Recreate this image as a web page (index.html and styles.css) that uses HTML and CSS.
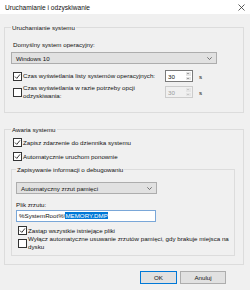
FILE: index.html
```html
<!DOCTYPE html>
<html lang="pl">
<head>
    <meta charset="UTF-8">
    <title>Uruchamianie i odzyskiwanie</title>
    <link rel="stylesheet" href="styles.css">
</head>
<body>

<div class="dialog">
    <div class="titlebar">
        <span class="title">Uruchamianie i odzyskiwanie</span>
        <svg class="close" width="7" height="7" viewBox="0 0 7 7"><path d="M0.5 0.5L6.5 6.5M6.5 0.5L0.5 6.5" stroke="#333" stroke-width="0.8"/></svg>
    </div>

    <div class="content">
        <fieldset class="group startup">
            <legend>Uruchamianie systemu</legend>
            <div class="label">Domyślny system operacyjny:</div>
            <div class="select os-select">
                <span>Windows 10</span>
                <svg width="5" height="3" viewBox="0 0 5 3"><path d="M0.3 0.3L2.5 2.5L4.7 0.3" fill="none" stroke="#444" stroke-width="0.7"/></svg>
            </div>

            <div class="opt-row">
                <span class="box"><svg width="7" height="7" viewBox="0 0 7 7"><path d="M1 3.6L2.8 5.4L6 1.4" fill="none" stroke="#222" stroke-width="0.9"/></svg></span>
                <span class="opt-text">Czas wyświetlania listy systemów operacyjnych:</span>
                <div class="spin">
                    <span class="spin-val">30</span>
                    <span class="spin-btns"><i class="up"></i><i class="down"></i></span>
                </div>
                <span class="unit">s</span>
            </div>

            <div class="opt-row two-line">
                <span class="box"></span>
                <span class="opt-text">Czas wyświetlania w razie potrzeby opcji<br>odzyskiwania:</span>
                <div class="spin disabled">
                    <span class="spin-val">30</span>
                    <span class="spin-btns"><i class="up"></i><i class="down"></i></span>
                </div>
                <span class="unit">s</span>
            </div>
        </fieldset>

        <fieldset class="group failure">
            <legend>Awaria systemu</legend>
            <div class="check-row">
                <span class="box"><svg width="7" height="7" viewBox="0 0 7 7"><path d="M1 3.6L2.8 5.4L6 1.4" fill="none" stroke="#222" stroke-width="0.9"/></svg></span>
                <span>Zapisz zdarzenie do dziennika systemu</span>
            </div>
            <div class="check-row">
                <span class="box"><svg width="7" height="7" viewBox="0 0 7 7"><path d="M1 3.6L2.8 5.4L6 1.4" fill="none" stroke="#222" stroke-width="0.9"/></svg></span>
                <span>Automatycznie uruchom ponownie</span>
            </div>

            <fieldset class="group debug">
                <legend>Zapisywanie informacji o debugowaniu</legend>
                <div class="select dump-select">
                    <span>Automatyczny zrzut pamięci</span>
                    <svg width="5" height="3" viewBox="0 0 5 3"><path d="M0.3 0.3L2.5 2.5L4.7 0.3" fill="none" stroke="#444" stroke-width="0.7"/></svg>
                </div>
                <div class="label file-label">Plik zrzutu:</div>
                <div class="textbox">%SystemRoot%\<span class="sel">MEMORY.DMP</span></div>
                <div class="check-row overwrite">
                    <span class="box"><svg width="7" height="7" viewBox="0 0 7 7"><path d="M1 3.6L2.8 5.4L6 1.4" fill="none" stroke="#222" stroke-width="0.9"/></svg></span>
                    <span>Zastąp wszystkie istniejące pliki</span>
                </div>
                <div class="check-row two-line">
                    <span class="box"></span>
                    <span>Wyłącz automatyczne usuwanie zrzutów pamięci, gdy brakuje miejsca na<br>dysku</span>
                </div>
            </fieldset>
        </fieldset>

        <div class="buttons">
            <button class="btn default">OK</button>
            <button class="btn">Anuluj</button>
        </div>
    </div>
</div>

</body>
</html>
```

FILE: styles.css
```css
body {
    margin: 0;
    font-family: "Liberation Sans", Arial, sans-serif;
    font-size: 6.2px;
    color: #111;
    background-color: #f0f0f0;
}
.dialog {
    width: 250px;
    height: 290px;
    overflow: hidden;
    background-color: #f0f0f0;
}
.titlebar {
    height: 14px;
    background-color: #ffffff;
    display: flex;
    align-items: center;
    justify-content: space-between;
    padding: 0 5px 0 5px;
}
.title {
    font-size: 6.6px;
    color: #111;
}
.content {
    padding: 10px 6px 0 4px;
}
.group {
    margin: 0;
    border: 1px solid #dcdcdc;
    padding: 0 6px 0 6px;
}
.group legend {
    padding: 0 1px;
    margin-left: 0;
    color: #111;
}
.startup {
    padding-top: 10px;
    padding-bottom: 12px;
}
.label {
    height: 8px;
    line-height: 8px;
    padding-left: 2px;
}
.select {
    display: flex;
    align-items: center;
    justify-content: space-between;
    height: 10px;
    margin-top: 3px;
    padding: 0 4px 0 4px;
    background-color: #e1e1e1;
    border: 1px solid #adadad;
}
.os-select {
    width: 196px;
}
.opt-row {
    display: flex;
    align-items: center;
    margin-top: 6px;
    height: 12px;
}
.opt-row.two-line {
    margin-top: 2px;
    height: 16px;
}
.box {
    width: 7px;
    height: 7px;
    border: 1px solid #333;
    background-color: #fff;
    margin: 0 1px 0 2px;
    flex: none;
    display: flex;
}
.opt-text {
    width: 142px;
    line-height: 8px;
}
.spin {
    display: flex;
    width: 26px;
    height: 10px;
    background-color: #fff;
    border: 1px solid #7a7a7a;
    align-items: center;
}
.spin.disabled {
    border-color: #cccccc;
    color: #9a9a9a;
    background-color: #f0f0f0;
}
.spin-val {
    flex: 1;
    padding-left: 2px;
}
.spin-btns {
    width: 5px;
    height: 8px;
    margin-right: 1px;
    display: flex;
    flex-direction: column;
    gap: 1px;
}
.spin-btns i {
    flex: 1;
    background-color: #e5e5e5;
    position: relative;
}
.spin-btns i::after {
    content: "";
    position: absolute;
    left: 1px;
    border-left: 1.5px solid transparent;
    border-right: 1.5px solid transparent;
}
.spin-btns .up::after {
    top: 1px;
    border-bottom: 1.5px solid #555;
}
.spin-btns .down::after {
    top: 1px;
    border-top: 1.5px solid #555;
}
.spin.disabled .spin-btns .up::after {
    border-bottom-color: #aaa;
}
.spin.disabled .spin-btns .down::after {
    border-top-color: #aaa;
}
.unit {
    margin-left: 6px;
}
.failure {
    margin-top: 13px;
    padding: 0 8px 8px 6px;
}
.check-row {
    display: flex;
    align-items: center;
    height: 9px;
    margin-top: 5px;
}
.check-row + .check-row {
    margin-top: 5px;
}
.debug {
    margin-top: 5px;
    padding: 0 4px 4px 4px;
}
.dump-select {
    width: 131px;
    margin-top: 9px;
}
.file-label {
    margin-top: 7px;
    padding-left: 0;
}
.textbox {
    width: 136px;
    height: 10px;
    line-height: 10px;
    margin-top: 1px;
    padding-left: 2px;
    background-color: #fff;
    border: 1px solid #7aa7d8;
    white-space: nowrap;
}
.sel {
    background-color: #0078d7;
    color: #fff;
}
.debug .overwrite {
    margin-top: 4px;
}
.debug .two-line {
    height: 16px;
    margin-top: 0;
    line-height: 8px;
}
.buttons {
    display: flex;
    justify-content: flex-end;
    gap: 3px;
    margin-top: 6px;
    padding-right: 18px;
}
.btn {
    width: 46px;
    height: 13px;
    padding: 0;
    font-family: inherit;
    font-size: 6.2px;
    color: #111;
    background-color: #e1e1e1;
    border: 1px solid #adadad;
}
.btn.default {
    width: 37px;
    border-color: #0078d7;
}
```
